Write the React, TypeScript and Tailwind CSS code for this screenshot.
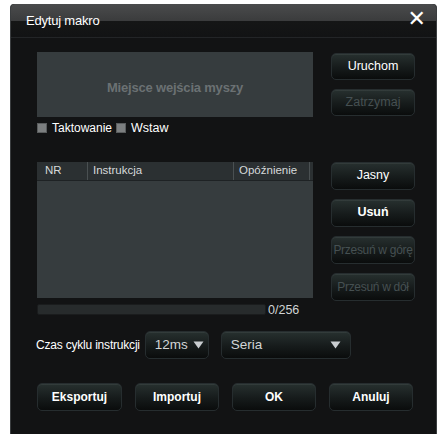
import React from "react";

const base =
  "flex items-center rounded-[5px] border border-[#262d2f] bg-[linear-gradient(to_bottom,#27302f_0%,#161b1b_55%,#0a0c0c_100%)] shadow-[inset_0_1px_0_rgba(255,255,255,0.06)]";
const btn = `${base} justify-center`;

function Tri() {
  return (
    <svg width="11" height="8" viewBox="0 0 11 8">
      <path d="M0.5 0.5 H10.5 L5.5 7.5 Z" fill="#c9cdd0" />
    </svg>
  );
}

export default function App() {
  return (
    <div className="w-[440px] h-[434px] bg-white overflow-hidden" style={{ fontFamily: '"Liberation Sans", Arial, sans-serif' }}>
      <div className="ml-[10px] mt-[4px] w-[427px] h-[430px] bg-[#121314] border-l border-r border-[#3a3d3f] rounded-tl-[4px] rounded-tr-[4px] flex flex-col">
        {/* title bar */}
        <div className="h-[34px] flex items-center justify-between pl-[15px] pr-[10px] bg-[linear-gradient(to_bottom,#4a4b4c_0%,#3b3c3d_50%,#151616_53%,#121314_100%)] border-b border-[#232527] rounded-tl-[4px] rounded-tr-[4px]">
          <span className="text-[13px] text-white leading-none mt-[-1px] tracking-[-0.2px]">Edytuj makro</span>
          <span className="text-white text-[22px] leading-none font-bold mt-[-3px]" style={{ fontFamily: '"DejaVu Sans", sans-serif' }}>✕</span>
        </div>

        {/* section 1 */}
        <div className="flex pl-[26px] mt-[14px]">
          <div className="w-[276px] flex flex-col">
            <div className="h-[65px] bg-[#363c3e] flex items-center justify-center">
              <span className="text-[13px] font-bold text-[#6b7173] mt-[7px] tracking-[-0.2px]">Miejsce wejścia myszy</span>
            </div>
            <div className="flex items-center mt-[5px] text-[12px] text-white leading-none">
              <span className="block shrink-0 w-[10px] h-[10px] bg-[#7c7f80] border border-[#5a5d5e]" />
              <span className="ml-[5px]">Taktowanie</span>
              <span className="block shrink-0 w-[10px] h-[10px] bg-[#7c7f80] border border-[#5a5d5e] ml-[4px]" />
              <span className="ml-[5px] text-[12.5px]">Wstaw</span>
            </div>
          </div>
          <div className="ml-[18px] w-[84px] flex flex-col gap-[9px] mt-[1px]">
            <div className={`${btn} h-[27px] text-[12.5px] text-white`}>Uruchom</div>
            <div className={`${btn} h-[27px] text-[12.5px] text-[#465052]`}>Zatrzymaj</div>
          </div>
        </div>

        {/* section 2 */}
        <div className="flex pl-[26px] mt-[27px]">
          <div className="w-[276px] flex flex-col">
            <div className="h-[136px] bg-[#363c3e] flex flex-col">
              <div className="h-[19px] bg-[#2b3032] border-b border-[#1e2224] flex items-center text-[11.5px] text-[#d6d9da] leading-none">
                <div className="w-[51px] h-full flex items-center pl-[8px] border-r border-[#4a5052]">NR</div>
                <div className="w-[146px] h-full flex items-center pl-[5px] border-r border-[#4a5052]">Instrukcja</div>
                <div className="w-[76px] h-full flex items-center pl-[5px] border-r border-[#4a5052]">Opóźnienie</div>
              </div>
            </div>
            <div className="flex items-center mt-[6px]">
              <div className="w-[229px] h-[11px] bg-[#272b2c] border border-[#1a1c1d] rounded-[2px]" />
              <span className="ml-[2px] text-[12.5px] text-[#d0d3d4] leading-none">0/256</span>
            </div>
          </div>
          <div className="ml-[18px] w-[84px] flex flex-col gap-[9px]">
            <div className={`${btn} h-[28px] text-[12.5px] text-white`}>Jasny</div>
            <div className={`${btn} h-[28px] text-[12.5px] text-white font-bold`}>Usuń</div>
            <div className={`${btn} h-[28px] text-[12px] text-[#465052] tracking-[-0.3px] whitespace-nowrap`}>Przesuń w górę</div>
            <div className={`${btn} h-[28px] text-[12px] text-[#465052] tracking-[-0.3px] whitespace-nowrap`}>Przesuń w dół</div>
          </div>
        </div>

        {/* cycle row */}
        <div className="flex items-center pl-[25px] mt-[15px]">
          <span className="text-[12px] text-white tracking-[-0.2px]">Czas cyklu instrukcji</span>
          <div className={`${base} ml-[5px] w-[64px] h-[28px] justify-start pl-[9px] gap-[5px] text-[13.5px] text-[#d2d5d6]`}>
            <span>12ms</span>
            <Tri />
          </div>
          <div className={`${base} ml-[12px] w-[130px] h-[28px] justify-between pl-[9px] pr-[9px] text-[13.5px] text-[#d2d5d6]`}>
            <span>Seria</span>
            <Tri />
          </div>
        </div>

        {/* bottom buttons */}
        <div className="flex pl-[26px] mt-[24px] gap-[13px]">
          <div className={`${btn} w-[85px] h-[28px] text-[12px] text-white font-bold`}>Eksportuj</div>
          <div className={`${btn} w-[84px] h-[28px] text-[12px] text-white font-bold`}>Importuj</div>
          <div className={`${btn} w-[84px] h-[28px] text-[12px] text-white font-bold`}>OK</div>
          <div className={`${btn} w-[84px] h-[28px] text-[12px] text-white font-bold`}>Anuluj</div>
        </div>
      </div>
    </div>
  );
}
